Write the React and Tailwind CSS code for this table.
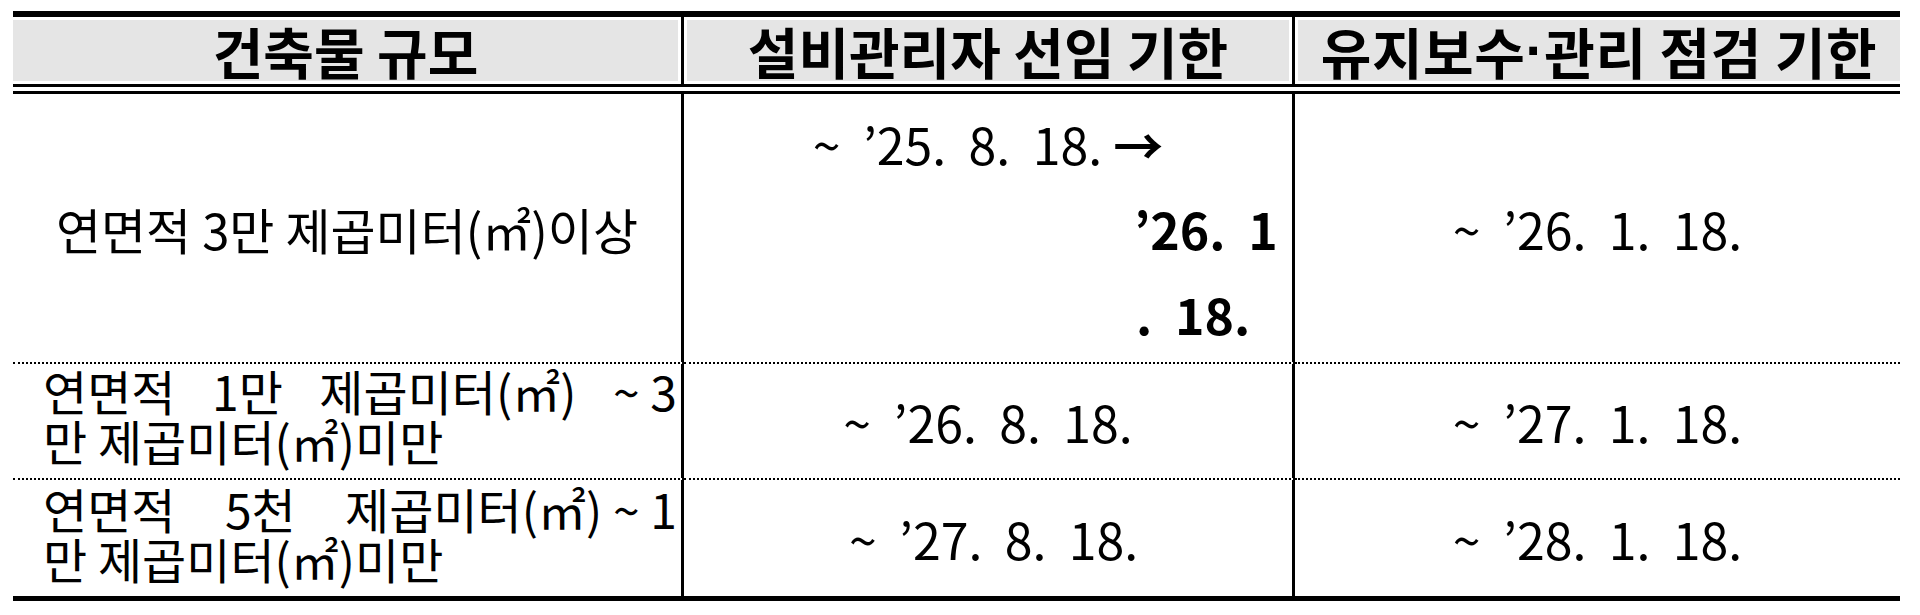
const rows = [
  { size: ["연면적", "1만", "제곱미터(㎡)", "~ 3"], rest: "만 제곱미터(㎡)미만", hire: "~  ’26.  8.  18.", check: "~  ’27.  1.  18." },
  { size: ["연면적", "5천", "제곱미터(㎡) ~ 1"], rest: "만 제곱미터(㎡)미만", hire: " ~  ’27.  8.  18.", check: "~  ’28.  1.  18." },
];

export default function App() {
  return (
    <div className="w-[1920px] h-[615px] overflow-hidden bg-white pt-[11px] pl-[13px] text-black font-['Noto_Sans_CJK_KR',sans-serif]">
      <div className="w-[1887px]">
        <div className="h-[6px] bg-black" />

        {/* header */}
        <div className="grid grid-cols-[671px_611px_605px] h-[67px] text-[55px] font-bold leading-none whitespace-nowrap">
          <div className="py-[3px] pr-[3px] border-r-[3px] border-black">
            <div className="h-full bg-[#e5e5e5] flex items-center justify-center">건축물 규모</div>
          </div>
          <div className="py-[3px] px-[3px] border-r-[3px] border-black">
            <div className="h-full bg-[#e5e5e5] flex items-center justify-center">설비관리자 선임 기한</div>
          </div>
          <div className="py-[3px] pl-[3px]">
            <div className="h-full bg-[#e5e5e5] flex items-center justify-center tracking-[0.01em]">
              유지보수<span className="font-['Liberation_Sans',sans-serif]">·</span>관리 점검 기한
            </div>
          </div>
        </div>
        <div className="h-[3px] bg-black" />
        <div className="h-[4px]" />
        <div className="h-[3px] bg-black" />

        {/* first row */}
        <div className="grid grid-cols-[671px_611px_605px] h-[270px] leading-none">
          <div className="flex items-center justify-center text-[49px] border-r-[3px] border-b-2 border-black [border-bottom-style:dotted] whitespace-pre">
            연면적 3만 제곱미터(㎡)이상
          </div>
          <div className="flex flex-col justify-center text-[50px] border-r-[3px] border-b-2 border-black [border-bottom-style:dotted] whitespace-pre">
            <div className="h-[85px] flex items-center justify-center">
              ~  ’25.  8.  18. <span className="font-bold">→</span>
            </div>
            <div className="h-[85px] flex items-center pl-[450px] font-bold">’26.  1</div>
            <div className="h-[85px] flex items-center pl-[452px] font-bold">.  18.</div>
          </div>
          <div className="flex items-center justify-center text-[50px] border-b-2 border-black [border-bottom-style:dotted] whitespace-pre">
            ~  ’26.  1.  18.
          </div>
        </div>

        {rows.map((r, i) => (
          <div key={i} className="grid grid-cols-[671px_611px_605px] h-[116px] leading-none">
            <div
              className={
                i === 0
                  ? "flex flex-col justify-center pl-[30px] pr-[4px] pb-[12px] text-[48px] border-r-[3px] border-b-2 border-black [border-bottom-style:dotted]"
                  : "flex flex-col justify-center pl-[30px] pr-[4px] pb-[10px] text-[48px] border-r-[3px] border-black"
              }
            >
              <div className="h-[50px] flex items-center justify-between whitespace-pre">
                {r.size.map((w) => (
                  <span key={w}>{w}</span>
                ))}
              </div>
              <div className="h-[50px] flex items-center whitespace-pre">{r.rest}</div>
            </div>
            <div
              className={
                i === 0
                  ? "flex items-center justify-center text-[50px] border-r-[3px] border-b-2 border-black [border-bottom-style:dotted] whitespace-pre"
                  : "flex items-center justify-center text-[50px] border-r-[3px] border-black whitespace-pre"
              }
            >
              {r.hire}
            </div>
            <div
              className={
                i === 0
                  ? "flex items-center justify-center text-[50px] border-b-2 border-black [border-bottom-style:dotted] whitespace-pre"
                  : "flex items-center justify-center text-[50px] whitespace-pre"
              }
            >
              {r.check}
            </div>
          </div>
        ))}

        <div className="h-[5px] bg-black" />
      </div>
    </div>
  );
}
